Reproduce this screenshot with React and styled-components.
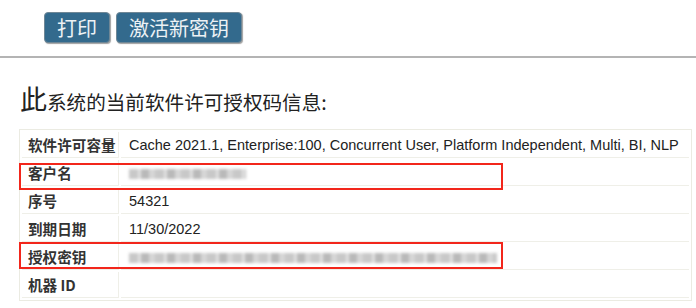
import React from "react";
import styled, { createGlobalStyle } from "styled-components";

const GlobalStyle = createGlobalStyle`
  body {
    margin: 0;
    background: #fff;
    font-family: "Liberation Sans", "Noto Sans CJK SC", sans-serif;
    color: #333;
  }
`;

const Toolbar = styled.div`
  display: flex;
  gap: 6px;
  padding: 12px 0 13px 44px;
`;

const Button = styled.button`
  height: 31px;
  padding: 0 12px;
  background: #336a8d;
  color: #edf2f5;
  font-family: "Noto Sans CJK SC", sans-serif;
  font-size: 20px;
  line-height: 29px;
  border: 1px solid #6f8796;
  border-radius: 4px;
  box-shadow: 1px 1px 1px #a0a0a0;
  cursor: pointer;
`;

const Rule = styled.div`
  height: 2px;
  background: #b4b4b4;
`;

const Title = styled.h2`
  margin: 26px 0 12px 20px;
  font-weight: normal;
  font-size: 19.6px;
  line-height: 30px;
  color: #222;
  font-family: "Noto Sans CJK SC", sans-serif;

  strong {
    font-size: 27px;
    font-weight: normal;
  }
`;

const TableWrap = styled.div`
  position: relative;
  margin-left: 19px;
  width: 673px;
`;

const Table = styled.table`
  width: 100%;
  border: 1px solid #ebebe2;
  border-spacing: 2px;
  font-size: 14.5px;
`;

const Label = styled.td`
  width: 88px;
  padding: 5px 2px 4px 6px;
  line-height: 16px;
  font-size: 14.6px;
  font-weight: bold;
  font-family: "Noto Sans CJK SC", sans-serif;
  color: #333;
  white-space: nowrap;
  border-bottom: 1px solid #efefe8;
  border-right: 1px solid #efefe8;
`;

const Value = styled.td`
  padding: 5px 8px 4px;
  line-height: 16px;
  color: #222;
  white-space: nowrap;
  border-bottom: 1px solid #efefe8;
`;

const Blurred = styled.span`
  display: inline-block;
  width: ${(p) => p.$w}px;
  height: 10px;
  vertical-align: middle;
  background: repeating-linear-gradient(
    90deg,
    #c8c8c8 0 9px,
    #e2e2e2 9px 12px,
    #b9b9b9 12px 20px,
    #d6d6d6 20px 26px
  );
  filter: blur(1.5px);
`;

const Highlight = styled.div`
  position: absolute;
  left: 0;
  top: ${(p) => p.$top}px;
  width: 484px;
  height: 27px;
  border: 2px solid #f2261b;
  box-sizing: border-box;
  pointer-events: none;
`;

const rows = [
  {
    label: "软件许可容量",
    value:
      "Cache 2021.1, Enterprise:100, Concurrent User, Platform Independent, Multi, BI, NLP",
  },
  { label: "客户名", blur: 117 },
  { label: "序号", value: "54321" },
  { label: "到期日期", value: "11/30/2022" },
  { label: "授权密钥", blur: 368 },
  { label: "机器 ID", value: "" },
];

export default function App() {
  return (
    <>
      <GlobalStyle />
      <Toolbar>
        <Button>打印</Button>
        <Button>激活新密钥</Button>
      </Toolbar>
      <Rule />
      <Title>
        <strong>此</strong>系统的当前软件许可授权码信息:
      </Title>
      <TableWrap>
        <Table>
          <tbody>
            {rows.map((r) => (
              <tr key={r.label}>
                <Label>{r.label}</Label>
                <Value>{r.blur ? <Blurred $w={r.blur} /> : r.value || "\u00a0"}</Value>
              </tr>
            ))}
          </tbody>
        </Table>
        <Highlight $top={34} />
        <Highlight $top={113} />
      </TableWrap>
    </>
  );
}
